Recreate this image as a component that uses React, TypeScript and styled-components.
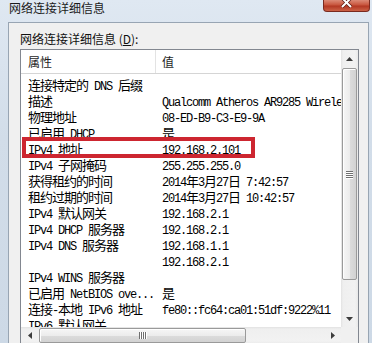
import React from 'react';
import styled, { createGlobalStyle } from 'styled-components';

const GlobalStyle = createGlobalStyle`
  html, body { margin: 0; padding: 0; }
  body {
    background: #d6e1ed;
    overflow: hidden;
    font-family: "Noto Sans CJK SC", sans-serif;
  }
`;

const Window = styled.div`
  width: 372px;
  height: 343px;
  overflow: hidden;
  display: flex;
  flex-direction: column;
  background: linear-gradient(#dfe8f2, #d2dde9 40%, #cdd9e6);
`;

const TitleBar = styled.div`
  height: 22px;
  flex: none;
  display: flex;
  justify-content: space-between;
  align-items: flex-start;
  padding: 0 2px 0 9px;
`;

const Title = styled.div`
  font: 12px/15px "Noto Sans CJK SC", sans-serif;
  height: 15px;
  color: #1b1b1b;
`;

const CloseButton = styled.div`
  width: 47px;
  height: 12px;
  box-sizing: border-box;
  border: 1px solid #7a2a1f;
  border-top: none;
  border-radius: 0 0 4px 4px;
  background: linear-gradient(#dc8a76, #c8553d 45%, #b33823 55%, #cb6247);
  display: flex;
  justify-content: center;
  align-items: flex-start;
  overflow: hidden;
`;

const Panel = styled.div`
  flex: 1;
  margin: 0 3px 0 8px;
  padding: 8px 9px 0 11px;
  background: #f0f0f0;
  border: 1px solid #98a5b3;
  border-bottom: none;
  display: flex;
  flex-direction: column;
  min-height: 0;
`;

const Label = styled.div`
  height: 16px;
  line-height: 16px;
  font-size: 12px;
  color: #111;
  margin-bottom: 2px;
  white-space: nowrap;
`;

const ListView = styled.div`
  position: relative;
  flex: none;
  height: 296px;
  box-sizing: border-box;
  border: 1px solid #828790;
  background: #fff;
  display: grid;
  grid-template-columns: 1fr 17px;
  grid-template-rows: 1fr 17px;
  overflow: hidden;
`;

const Content = styled.div`
  grid-row: 1;
  grid-column: 1;
  overflow: hidden;
  min-width: 0;
`;

const Header = styled.div`
  height: 24px;
  box-sizing: border-box;
  border-bottom: 1px solid #d5d5d5;
  display: grid;
  grid-template-columns: 135px 1fr;
`;

const HeaderCell = styled.div<{ $divider?: boolean }>`
  font: 12px/23px "Noto Sans CJK SC", sans-serif;
  color: #1e1e1e;
  padding-left: ${p => (p.$divider ? 7 : 6)}px;
  border-right: ${p => (p.$divider ? '1px solid #e3e3e3' : 'none')};
`;

const Rows = styled.div`
  padding-top: 1px;
`;

const Row = styled.div`
  display: grid;
  grid-template-columns: 135px 1fr;
  height: 16px;
  line-height: 16px;
  white-space: nowrap;
  color: #000;
`;

const NameCell = styled.div`
  padding-left: 7px;
  height: 16px;
`;

const ValueCell = styled.div`
  padding-left: 6px;
  height: 16px;
`;

const Han = styled.span`
  font-family: "Noto Sans CJK SC", sans-serif;
  font-size: 13px;
  letter-spacing: -1px;
`;

const Latin = styled.span`
  white-space: pre;
  font-family: "Liberation Mono", monospace;
  font-size: 12px;
  letter-spacing: -1.2px;
`;

const Highlight = styled.div`
  position: absolute;
  left: 1px;
  top: 87px;
  width: 233px;
  height: 21px;
  box-sizing: border-box;
  border: 4px solid #cd2630;
  pointer-events: none;
`;

const VScroll = styled.div`
  grid-row: 1;
  grid-column: 2;
  display: flex;
  flex-direction: column;
  background: linear-gradient(to right, #e2e2e2 0, #efefef 2px, #f2f2f2 14px, #e9e9e9 17px);
`;

const HScroll = styled.div`
  grid-row: 2;
  grid-column: 1;
  display: flex;
  background: linear-gradient(#e2e2e2 0, #efefef 2px, #f2f2f2 14px, #e9e9e9 17px);
`;

const Corner = styled.div`
  grid-row: 2;
  grid-column: 2;
  background: #f0f0f0;
`;

const ArrowButton = styled.div`
  flex: none;
  width: 17px;
  height: 17px;
  display: flex;
  align-items: center;
  justify-content: center;
`;

const Spacer = styled.div`
  flex: 1;
`;

const VThumb = styled.div`
  flex: none;
  height: 212px;
  margin: 1px 1px 0;
  box-sizing: border-box;
  border: 1px solid #9a9a9a;
  border-radius: 2px;
  background: linear-gradient(to right, #f6f6f6, #ececec 50%, #dcdcdc 51%, #d2d2d2);
  box-shadow: inset 1px 1px 0 #fff;
  display: flex;
  align-items: center;
  justify-content: center;
`;

const HThumb = styled.div`
  flex: none;
  width: 207px;
  margin: 1px 0 1px 1px;
  box-sizing: border-box;
  border: 1px solid #9a9a9a;
  border-radius: 2px;
  background: linear-gradient(#f6f6f6, #ececec 50%, #dcdcdc 51%, #d2d2d2);
  box-shadow: inset 1px 1px 0 #fff;
  display: flex;
  align-items: center;
  justify-content: center;
`;

const Grip = styled.div<{ $vertical?: boolean }>`
  display: flex;
  flex-direction: ${p => (p.$vertical ? 'column' : 'row')};
  gap: 1px;
`;

const GripLine = styled.div<{ $vertical?: boolean }>`
  width: ${p => (p.$vertical ? '7px' : '1px')};
  height: ${p => (p.$vertical ? '1px' : '7px')};
  background: #6f6f6f;
  box-shadow: ${p => (p.$vertical ? '0 1px 0 #fff' : '1px 0 0 #fff')};
`;

const CJK = /[\u3000-\u9fff\uff00-\uffef]/;

function Txt({ s }: { s: string }) {
  const parts = s.match(/[\u3000-\u9fff\uff00-\uffef]+|[^\u3000-\u9fff\uff00-\uffef]+/g) || [];
  return (
    <>
      {parts.map((p, i) => (CJK.test(p) ? <Han key={i}>{p}</Han> : <Latin key={i}>{p}</Latin>))}
    </>
  );
}

const rows: [string, string][] = [
  ['连接特定的 DNS 后缀', ''],
  ['描述', 'Qualcomm Atheros AR9285 Wireless Network Adapter'],
  ['物理地址', '08-ED-B9-C3-E9-9A'],
  ['已启用 DHCP', '是'],
  ['IPv4 地址', '192.168.2.101'],
  ['IPv4 子网掩码', '255.255.255.0'],
  ['获得租约的时间', '2014年3月27日 7:42:57'],
  ['租约过期的时间', '2014年3月27日 10:42:57'],
  ['IPv4 默认网关', '192.168.2.1'],
  ['IPv4 DHCP 服务器', '192.168.2.1'],
  ['IPv4 DNS 服务器', '192.168.1.1'],
  ['', '192.168.2.1'],
  ['IPv4 WINS 服务器', ''],
  ['已启用 NetBIOS ove...', '是'],
  ['连接-本地 IPv6 地址', 'fe80::fc64:ca01:51df:9222%11'],
  ['IPv6 默认网关', ''],
];

const Arrow = ({ dir }: { dir: 'up' | 'down' | 'left' | 'right' }) => {
  const pts = {
    up: '0,4 7,4 3.5,0',
    down: '0,0 7,0 3.5,4',
    left: '4,0 4,7 0,3.5',
    right: '0,0 0,7 4,3.5',
  }[dir];
  const horiz = dir === 'left' || dir === 'right';
  return (
    <svg width={horiz ? 4 : 7} height={horiz ? 7 : 4} viewBox={horiz ? '0 0 4 7' : '0 0 7 4'}>
      <polygon points={pts} fill="#3c3c3c" />
    </svg>
  );
};

export default function App() {
  return (
    <>
      <GlobalStyle />
      <Window>
        <TitleBar>
          <Title>网络连接详细信息</Title>
          <CloseButton>
            <svg width="13" height="10" viewBox="0 0 13 10" style={{ marginTop: -2 }}>
              <path d="M2 0 L11 9 M11 0 L2 9" stroke="#5a1a10" strokeWidth="3.4" />
              <path d="M2 0 L11 9 M11 0 L2 9" stroke="#fff" strokeWidth="2" />
            </svg>
          </CloseButton>
        </TitleBar>
        <Panel>
          <Label>
            网络连接详细信息 (<u>D</u>):
          </Label>
          <ListView>
            <Content>
              <Header>
                <HeaderCell $divider>属性</HeaderCell>
                <HeaderCell>值</HeaderCell>
              </Header>
              <Rows>
                {rows.map(([n, v], i) => (
                  <Row key={i}>
                    <NameCell>
                      <Txt s={n} />
                    </NameCell>
                    <ValueCell>
                      <Txt s={v} />
                    </ValueCell>
                  </Row>
                ))}
              </Rows>
            </Content>
            <VScroll>
              <ArrowButton>
                <Arrow dir="up" />
              </ArrowButton>
              <VThumb>
                <Grip $vertical>
                  <GripLine $vertical />
                  <GripLine $vertical />
                  <GripLine $vertical />
                  <GripLine $vertical />
                </Grip>
              </VThumb>
              <Spacer />
              <ArrowButton>
                <Arrow dir="down" />
              </ArrowButton>
            </VScroll>
            <HScroll>
              <ArrowButton>
                <Arrow dir="left" />
              </ArrowButton>
              <HThumb>
                <Grip>
                  <GripLine />
                  <GripLine />
                  <GripLine />
                  <GripLine />
                </Grip>
              </HThumb>
              <Spacer />
              <ArrowButton>
                <Arrow dir="right" />
              </ArrowButton>
            </HScroll>
            <Corner />
            <Highlight />
          </ListView>
        </Panel>
      </Window>
    </>
  );
}
